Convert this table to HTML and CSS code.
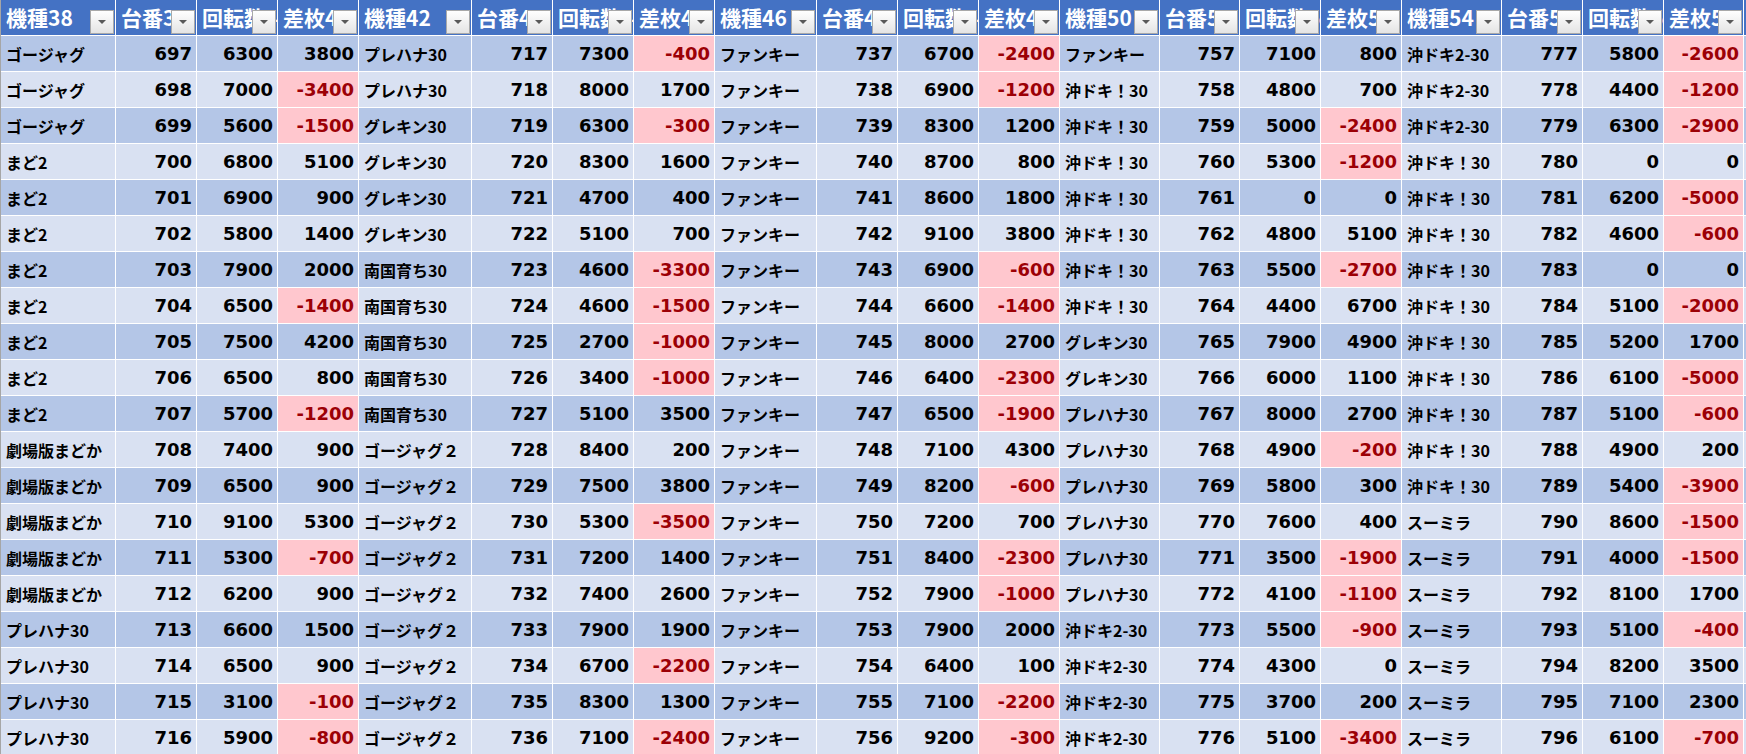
FILE: index.html
```html
<!DOCTYPE html>
<html lang="ja">
<head>
<meta charset="utf-8">
<title>Sheet</title>
<link rel="stylesheet" href="styles.css">
</head>
<body>
<div class="sheet">
  <div class="row head">
    <div class="h">機種38<span class="fb"></span></div><div class="h">台番39<span class="fb"></span></div><div class="h">回転数40<span class="fb"></span></div><div class="h">差枚41<span class="fb"></span></div>
    <div class="h">機種42<span class="fb"></span></div><div class="h">台番43<span class="fb"></span></div><div class="h">回転数44<span class="fb"></span></div><div class="h">差枚45<span class="fb"></span></div>
    <div class="h">機種46<span class="fb"></span></div><div class="h">台番47<span class="fb"></span></div><div class="h">回転数48<span class="fb"></span></div><div class="h">差枚49<span class="fb"></span></div>
    <div class="h">機種50<span class="fb"></span></div><div class="h">台番51<span class="fb"></span></div><div class="h">回転数52<span class="fb"></span></div><div class="h">差枚53<span class="fb"></span></div>
    <div class="h">機種54<span class="fb"></span></div><div class="h">台番55<span class="fb"></span></div><div class="h">回転数56<span class="fb"></span></div><div class="h">差枚57<span class="fb"></span></div>
    <div class="h"></div>
  </div>
  <div class="row">
    <div class="c t">ゴージャグ</div><div class="c n">697</div><div class="c n">6300</div><div class="c n">3800</div>
    <div class="c t">プレハナ30</div><div class="c n">717</div><div class="c n">7300</div><div class="c n neg">-400</div>
    <div class="c t">ファンキー</div><div class="c n">737</div><div class="c n">6700</div><div class="c n neg">-2400</div>
    <div class="c t">ファンキー</div><div class="c n">757</div><div class="c n">7100</div><div class="c n">800</div>
    <div class="c t">沖ドキ2-30</div><div class="c n">777</div><div class="c n">5800</div><div class="c n neg">-2600</div>
    <div class="c"></div>
  </div>
  <div class="row">
    <div class="c t">ゴージャグ</div><div class="c n">698</div><div class="c n">7000</div><div class="c n neg">-3400</div>
    <div class="c t">プレハナ30</div><div class="c n">718</div><div class="c n">8000</div><div class="c n">1700</div>
    <div class="c t">ファンキー</div><div class="c n">738</div><div class="c n">6900</div><div class="c n neg">-1200</div>
    <div class="c t">沖ドキ！30</div><div class="c n">758</div><div class="c n">4800</div><div class="c n">700</div>
    <div class="c t">沖ドキ2-30</div><div class="c n">778</div><div class="c n">4400</div><div class="c n neg">-1200</div>
    <div class="c"></div>
  </div>
  <div class="row">
    <div class="c t">ゴージャグ</div><div class="c n">699</div><div class="c n">5600</div><div class="c n neg">-1500</div>
    <div class="c t">グレキン30</div><div class="c n">719</div><div class="c n">6300</div><div class="c n neg">-300</div>
    <div class="c t">ファンキー</div><div class="c n">739</div><div class="c n">8300</div><div class="c n">1200</div>
    <div class="c t">沖ドキ！30</div><div class="c n">759</div><div class="c n">5000</div><div class="c n neg">-2400</div>
    <div class="c t">沖ドキ2-30</div><div class="c n">779</div><div class="c n">6300</div><div class="c n neg">-2900</div>
    <div class="c"></div>
  </div>
  <div class="row">
    <div class="c t">まど2</div><div class="c n">700</div><div class="c n">6800</div><div class="c n">5100</div>
    <div class="c t">グレキン30</div><div class="c n">720</div><div class="c n">8300</div><div class="c n">1600</div>
    <div class="c t">ファンキー</div><div class="c n">740</div><div class="c n">8700</div><div class="c n">800</div>
    <div class="c t">沖ドキ！30</div><div class="c n">760</div><div class="c n">5300</div><div class="c n neg">-1200</div>
    <div class="c t">沖ドキ！30</div><div class="c n">780</div><div class="c n">0</div><div class="c n">0</div>
    <div class="c"></div>
  </div>
  <div class="row">
    <div class="c t">まど2</div><div class="c n">701</div><div class="c n">6900</div><div class="c n">900</div>
    <div class="c t">グレキン30</div><div class="c n">721</div><div class="c n">4700</div><div class="c n">400</div>
    <div class="c t">ファンキー</div><div class="c n">741</div><div class="c n">8600</div><div class="c n">1800</div>
    <div class="c t">沖ドキ！30</div><div class="c n">761</div><div class="c n">0</div><div class="c n">0</div>
    <div class="c t">沖ドキ！30</div><div class="c n">781</div><div class="c n">6200</div><div class="c n neg">-5000</div>
    <div class="c"></div>
  </div>
  <div class="row">
    <div class="c t">まど2</div><div class="c n">702</div><div class="c n">5800</div><div class="c n">1400</div>
    <div class="c t">グレキン30</div><div class="c n">722</div><div class="c n">5100</div><div class="c n">700</div>
    <div class="c t">ファンキー</div><div class="c n">742</div><div class="c n">9100</div><div class="c n">3800</div>
    <div class="c t">沖ドキ！30</div><div class="c n">762</div><div class="c n">4800</div><div class="c n">5100</div>
    <div class="c t">沖ドキ！30</div><div class="c n">782</div><div class="c n">4600</div><div class="c n neg">-600</div>
    <div class="c"></div>
  </div>
  <div class="row">
    <div class="c t">まど2</div><div class="c n">703</div><div class="c n">7900</div><div class="c n">2000</div>
    <div class="c t">南国育ち30</div><div class="c n">723</div><div class="c n">4600</div><div class="c n neg">-3300</div>
    <div class="c t">ファンキー</div><div class="c n">743</div><div class="c n">6900</div><div class="c n neg">-600</div>
    <div class="c t">沖ドキ！30</div><div class="c n">763</div><div class="c n">5500</div><div class="c n neg">-2700</div>
    <div class="c t">沖ドキ！30</div><div class="c n">783</div><div class="c n">0</div><div class="c n">0</div>
    <div class="c"></div>
  </div>
  <div class="row">
    <div class="c t">まど2</div><div class="c n">704</div><div class="c n">6500</div><div class="c n neg">-1400</div>
    <div class="c t">南国育ち30</div><div class="c n">724</div><div class="c n">4600</div><div class="c n neg">-1500</div>
    <div class="c t">ファンキー</div><div class="c n">744</div><div class="c n">6600</div><div class="c n neg">-1400</div>
    <div class="c t">沖ドキ！30</div><div class="c n">764</div><div class="c n">4400</div><div class="c n">6700</div>
    <div class="c t">沖ドキ！30</div><div class="c n">784</div><div class="c n">5100</div><div class="c n neg">-2000</div>
    <div class="c"></div>
  </div>
  <div class="row">
    <div class="c t">まど2</div><div class="c n">705</div><div class="c n">7500</div><div class="c n">4200</div>
    <div class="c t">南国育ち30</div><div class="c n">725</div><div class="c n">2700</div><div class="c n neg">-1000</div>
    <div class="c t">ファンキー</div><div class="c n">745</div><div class="c n">8000</div><div class="c n">2700</div>
    <div class="c t">グレキン30</div><div class="c n">765</div><div class="c n">7900</div><div class="c n">4900</div>
    <div class="c t">沖ドキ！30</div><div class="c n">785</div><div class="c n">5200</div><div class="c n">1700</div>
    <div class="c"></div>
  </div>
  <div class="row">
    <div class="c t">まど2</div><div class="c n">706</div><div class="c n">6500</div><div class="c n">800</div>
    <div class="c t">南国育ち30</div><div class="c n">726</div><div class="c n">3400</div><div class="c n neg">-1000</div>
    <div class="c t">ファンキー</div><div class="c n">746</div><div class="c n">6400</div><div class="c n neg">-2300</div>
    <div class="c t">グレキン30</div><div class="c n">766</div><div class="c n">6000</div><div class="c n">1100</div>
    <div class="c t">沖ドキ！30</div><div class="c n">786</div><div class="c n">6100</div><div class="c n neg">-5000</div>
    <div class="c"></div>
  </div>
  <div class="row">
    <div class="c t">まど2</div><div class="c n">707</div><div class="c n">5700</div><div class="c n neg">-1200</div>
    <div class="c t">南国育ち30</div><div class="c n">727</div><div class="c n">5100</div><div class="c n">3500</div>
    <div class="c t">ファンキー</div><div class="c n">747</div><div class="c n">6500</div><div class="c n neg">-1900</div>
    <div class="c t">プレハナ30</div><div class="c n">767</div><div class="c n">8000</div><div class="c n">2700</div>
    <div class="c t">沖ドキ！30</div><div class="c n">787</div><div class="c n">5100</div><div class="c n neg">-600</div>
    <div class="c"></div>
  </div>
  <div class="row">
    <div class="c t">劇場版まどか</div><div class="c n">708</div><div class="c n">7400</div><div class="c n">900</div>
    <div class="c t">ゴージャグ２</div><div class="c n">728</div><div class="c n">8400</div><div class="c n">200</div>
    <div class="c t">ファンキー</div><div class="c n">748</div><div class="c n">7100</div><div class="c n">4300</div>
    <div class="c t">プレハナ30</div><div class="c n">768</div><div class="c n">4900</div><div class="c n neg">-200</div>
    <div class="c t">沖ドキ！30</div><div class="c n">788</div><div class="c n">4900</div><div class="c n">200</div>
    <div class="c"></div>
  </div>
  <div class="row">
    <div class="c t">劇場版まどか</div><div class="c n">709</div><div class="c n">6500</div><div class="c n">900</div>
    <div class="c t">ゴージャグ２</div><div class="c n">729</div><div class="c n">7500</div><div class="c n">3800</div>
    <div class="c t">ファンキー</div><div class="c n">749</div><div class="c n">8200</div><div class="c n neg">-600</div>
    <div class="c t">プレハナ30</div><div class="c n">769</div><div class="c n">5800</div><div class="c n">300</div>
    <div class="c t">沖ドキ！30</div><div class="c n">789</div><div class="c n">5400</div><div class="c n neg">-3900</div>
    <div class="c"></div>
  </div>
  <div class="row">
    <div class="c t">劇場版まどか</div><div class="c n">710</div><div class="c n">9100</div><div class="c n">5300</div>
    <div class="c t">ゴージャグ２</div><div class="c n">730</div><div class="c n">5300</div><div class="c n neg">-3500</div>
    <div class="c t">ファンキー</div><div class="c n">750</div><div class="c n">7200</div><div class="c n">700</div>
    <div class="c t">プレハナ30</div><div class="c n">770</div><div class="c n">7600</div><div class="c n">400</div>
    <div class="c t">スーミラ</div><div class="c n">790</div><div class="c n">8600</div><div class="c n neg">-1500</div>
    <div class="c"></div>
  </div>
  <div class="row">
    <div class="c t">劇場版まどか</div><div class="c n">711</div><div class="c n">5300</div><div class="c n neg">-700</div>
    <div class="c t">ゴージャグ２</div><div class="c n">731</div><div class="c n">7200</div><div class="c n">1400</div>
    <div class="c t">ファンキー</div><div class="c n">751</div><div class="c n">8400</div><div class="c n neg">-2300</div>
    <div class="c t">プレハナ30</div><div class="c n">771</div><div class="c n">3500</div><div class="c n neg">-1900</div>
    <div class="c t">スーミラ</div><div class="c n">791</div><div class="c n">4000</div><div class="c n neg">-1500</div>
    <div class="c"></div>
  </div>
  <div class="row">
    <div class="c t">劇場版まどか</div><div class="c n">712</div><div class="c n">6200</div><div class="c n">900</div>
    <div class="c t">ゴージャグ２</div><div class="c n">732</div><div class="c n">7400</div><div class="c n">2600</div>
    <div class="c t">ファンキー</div><div class="c n">752</div><div class="c n">7900</div><div class="c n neg">-1000</div>
    <div class="c t">プレハナ30</div><div class="c n">772</div><div class="c n">4100</div><div class="c n neg">-1100</div>
    <div class="c t">スーミラ</div><div class="c n">792</div><div class="c n">8100</div><div class="c n">1700</div>
    <div class="c"></div>
  </div>
  <div class="row">
    <div class="c t">プレハナ30</div><div class="c n">713</div><div class="c n">6600</div><div class="c n">1500</div>
    <div class="c t">ゴージャグ２</div><div class="c n">733</div><div class="c n">7900</div><div class="c n">1900</div>
    <div class="c t">ファンキー</div><div class="c n">753</div><div class="c n">7900</div><div class="c n">2000</div>
    <div class="c t">沖ドキ2-30</div><div class="c n">773</div><div class="c n">5500</div><div class="c n neg">-900</div>
    <div class="c t">スーミラ</div><div class="c n">793</div><div class="c n">5100</div><div class="c n neg">-400</div>
    <div class="c"></div>
  </div>
  <div class="row">
    <div class="c t">プレハナ30</div><div class="c n">714</div><div class="c n">6500</div><div class="c n">900</div>
    <div class="c t">ゴージャグ２</div><div class="c n">734</div><div class="c n">6700</div><div class="c n neg">-2200</div>
    <div class="c t">ファンキー</div><div class="c n">754</div><div class="c n">6400</div><div class="c n">100</div>
    <div class="c t">沖ドキ2-30</div><div class="c n">774</div><div class="c n">4300</div><div class="c n">0</div>
    <div class="c t">スーミラ</div><div class="c n">794</div><div class="c n">8200</div><div class="c n">3500</div>
    <div class="c"></div>
  </div>
  <div class="row">
    <div class="c t">プレハナ30</div><div class="c n">715</div><div class="c n">3100</div><div class="c n neg">-100</div>
    <div class="c t">ゴージャグ２</div><div class="c n">735</div><div class="c n">8300</div><div class="c n">1300</div>
    <div class="c t">ファンキー</div><div class="c n">755</div><div class="c n">7100</div><div class="c n neg">-2200</div>
    <div class="c t">沖ドキ2-30</div><div class="c n">775</div><div class="c n">3700</div><div class="c n">200</div>
    <div class="c t">スーミラ</div><div class="c n">795</div><div class="c n">7100</div><div class="c n">2300</div>
    <div class="c"></div>
  </div>
  <div class="row">
    <div class="c t">プレハナ30</div><div class="c n">716</div><div class="c n">5900</div><div class="c n neg">-800</div>
    <div class="c t">ゴージャグ２</div><div class="c n">736</div><div class="c n">7100</div><div class="c n neg">-2400</div>
    <div class="c t">ファンキー</div><div class="c n">756</div><div class="c n">9200</div><div class="c n neg">-300</div>
    <div class="c t">沖ドキ2-30</div><div class="c n">776</div><div class="c n">5100</div><div class="c n neg">-3400</div>
    <div class="c t">スーミラ</div><div class="c n">796</div><div class="c n">6100</div><div class="c n neg">-700</div>
    <div class="c"></div>
  </div>
</div>
</body>
</html>
```
FILE: styles.css
```css
html, body {
  margin: 0;
  padding: 0;
  background: #ffffff;
  overflow: hidden;
}

.sheet {
  display: grid;
  grid-template-columns: 114px 80px 80px 80px 112px 80px 80px 80px 101px 80px 80px 80px 99px 79px 80px 80px 99px 80px 80px 79px 1fr;
  grid-template-rows: 35px repeat(20, 35px);
  gap: 1px;
  background: #ffffff;
  border-left: 1px solid #a6a6a6;
  width: 1745px;
}

.row {
  display: contents;
}

.h {
  position: relative;
  background: #4472c4;
  color: #ffffff;
  font-family: "Noto Sans CJK JP", "Noto Sans", sans-serif;
  font-size: 21px;
  font-weight: 700;
  line-height: 35px;
  padding-left: 5px;
  white-space: nowrap;
  overflow: hidden;
}

.fb {
  position: absolute;
  right: 1px;
  bottom: 1px;
  width: 24px;
  height: 24px;
  box-sizing: border-box;
  border: 1px solid #a9a9a9;
  background: linear-gradient(#ffffff, #e4e4e4);
}

.fb::after {
  content: "";
  position: absolute;
  left: 7px;
  top: 9px;
  width: 0;
  height: 0;
  border-left: 4px solid transparent;
  border-right: 4px solid transparent;
  border-top: 4px solid #595959;
}

.c {
  background: #d9e1f2;
  color: #000000;
  white-space: nowrap;
  overflow: hidden;
  display: flex;
  align-items: center;
}

.row:nth-child(even) > .c {
  background: #b4c6e7;
}

.t {
  font-family: "Noto Sans CJK JP", "Noto Sans", sans-serif;
  font-size: 16px;
  font-weight: 700;
  padding-left: 5px;
}

.n {
  font-family: "DejaVu Sans", "Verdana", sans-serif;
  font-size: 18px;
  font-weight: 700;
  justify-content: flex-end;
  padding-right: 4px;
}

.row > .c.neg {
  background: #ffc7ce;
  color: #9c0006;
}
```
